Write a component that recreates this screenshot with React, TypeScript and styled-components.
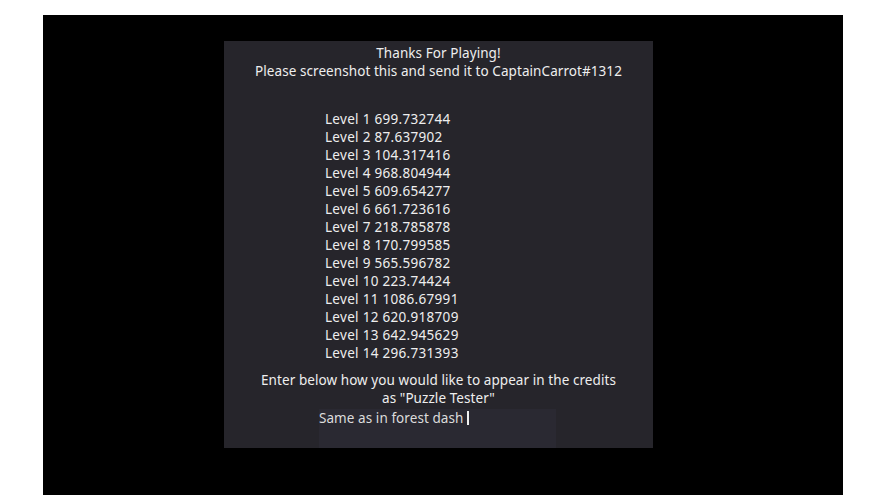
import React from 'react'
import styled, { createGlobalStyle } from 'styled-components'

const GlobalStyle = createGlobalStyle`
  html, body {
    margin: 0;
    padding: 0;
    background: #ffffff;
  }
  body {
    font-family: 'Noto Sans', 'Open Sans', sans-serif;
  }
`

const Page = styled.div`
  width: 888px;
  height: 501px;
  padding-top: 15px;
  padding-left: 43px;
  box-sizing: border-box;
`

const Screen = styled.div`
  width: 800px;
  height: 480px;
  background: #000000;
  padding-top: 26px;
  padding-left: 181px;
  box-sizing: border-box;
  display: flex;
`

const Panel = styled.div`
  width: 429px;
  height: 407px;
  background: #26252b;
  color: #eeeeee;
  font-size: 13.5px;
  line-height: 18px;
  letter-spacing: 0.07px;
  padding-top: 3px;
  box-sizing: border-box;
  display: flex;
  flex-direction: column;
  align-items: center;
`

const Header = styled.div`
  text-align: center;
`

const Scores = styled.div`
  margin-top: 30px;
  align-self: flex-start;
  margin-left: 101px;
  letter-spacing: 0.3px;
`

const Line = styled.div`
  white-space: pre;
`

const Prompt = styled.div`
  margin-top: 9px;
  text-align: center;
`

const NameInput = styled.div`
  margin-top: 2px;
  width: 237px;
  height: 40px;
  align-self: flex-start;
  margin-left: 95px;
  background: #2a2932;
  color: #dcdcdc;
  box-sizing: border-box;
`

const Caret = styled.span`
  display: inline-block;
  width: 2px;
  height: 14px;
  margin-left: 4px;
  vertical-align: -2px;
  background: #f0f0f0;
`

const scores: [number, string][] = [
  [1, '699.732744'],
  [2, '87.637902'],
  [3, '104.317416'],
  [4, '968.804944'],
  [5, '609.654277'],
  [6, '661.723616'],
  [7, '218.785878'],
  [8, '170.799585'],
  [9, '565.596782'],
  [10, '223.74424'],
  [11, '1086.67991'],
  [12, '620.918709'],
  [13, '642.945629'],
  [14, '296.731393'],
]

export default function App() {
  return (
    <>
      <GlobalStyle />
      <Page>
        <Screen>
          <Panel>
            <Header>
              <Line>Thanks For Playing!</Line>
              <Line>Please screenshot this and send it to CaptainCarrot#1312</Line>
            </Header>
            <Scores>
              {scores.map(([level, time]) => (
                <Line key={level}>{`Level ${level} ${time}`}</Line>
              ))}
            </Scores>
            <Prompt>
              <Line>Enter below how you would like to appear in the credits</Line>
              <Line>as "Puzzle Tester"</Line>
            </Prompt>
            <NameInput>
              Same as in forest dash
              <Caret />
            </NameInput>
          </Panel>
        </Screen>
      </Page>
    </>
  )
}
